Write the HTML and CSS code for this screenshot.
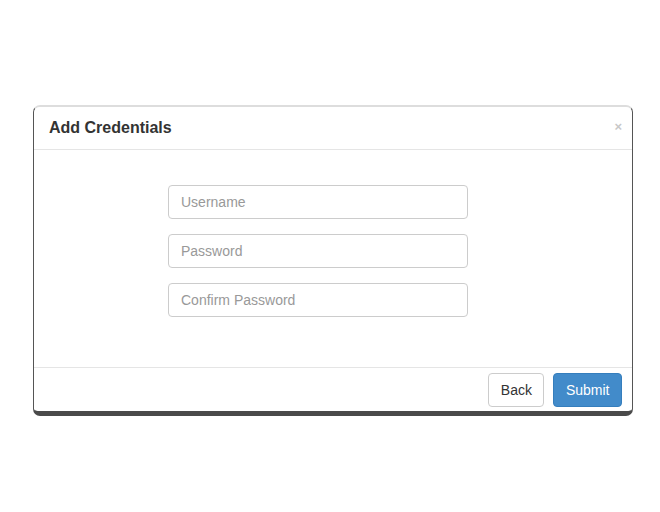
FILE: index.html
```html
<!DOCTYPE html>
<html>
<head>
<meta charset="utf-8">
<link rel="stylesheet" href="styles.css">
</head>
<body>
<div class="modal">
  <div class="modal-header">
    <h4 class="modal-title">Add Credentials</h4>
    <span class="close">×</span>
  </div>
  <div class="modal-body">
    <input class="form-control" type="text" placeholder="Username">
    <input class="form-control" type="password" placeholder="Password">
    <input class="form-control" type="password" placeholder="Confirm Password">
  </div>
  <div class="modal-footer">
    <button class="btn btn-default">Back</button>
    <button class="btn btn-primary">Submit</button>
  </div>
</div>
</body>
</html>
```
FILE: styles.css
```css
html, body {
  margin: 0;
  padding: 0;
  background: #fff;
  font-family: "Liberation Sans", Arial, sans-serif;
  font-size: 14px;
  color: #333;
}
.modal {
  margin: 105px 0 0 33px;
  width: 600px;
  box-sizing: border-box;
  border: 1px solid #c8c8c8;
  border-left-color: #555;
  border-right-color: #555;
  border-bottom: 5px solid #4a4a4a;
  border-top: 2px solid #ddd;
  border-radius: 7px;
  background: #fff;
}
.modal-header {
  display: flex;
  justify-content: space-between;
  align-items: center;
  height: 42px;
  padding: 0 10px 0 15px;
  border-bottom: 1px solid #e5e5e5;
}
.modal-title {
  margin: 0;
  font-size: 16px;
  font-weight: bold;
  color: #333;
}
.close {
  font-size: 13px;
  font-weight: bold;
  color: #c8c8c8;
  margin-top: -4px;
}
.modal-body {
  display: flex;
  flex-direction: column;
  gap: 15px;
  padding: 35px 0 50px 134px;
}
.form-control {
  width: 300px;
  height: 34px;
  box-sizing: border-box;
  border: 1px solid #ccc;
  border-radius: 4px;
  padding: 6px 12px;
  font-family: inherit;
  font-size: 14px;
  color: #555;
  margin: 0;
}
.form-control::placeholder {
  color: #999;
}
.modal-footer {
  display: flex;
  justify-content: flex-end;
  gap: 9px;
  padding: 5px 10px 4px;
  border-top: 1px solid #e5e5e5;
}
.btn {
  height: 34px;
  padding: 6px 11.5px;
  font-family: inherit;
  font-size: 14px;
  border-radius: 4px;
  border: 1px solid transparent;
  line-height: 20px;
}
.btn-default {
  background: #fff;
  border-color: #ccc;
  color: #333;
}
.btn-primary {
  background: #428bca;
  border-color: #357ebd;
  color: #fff;
}
```
